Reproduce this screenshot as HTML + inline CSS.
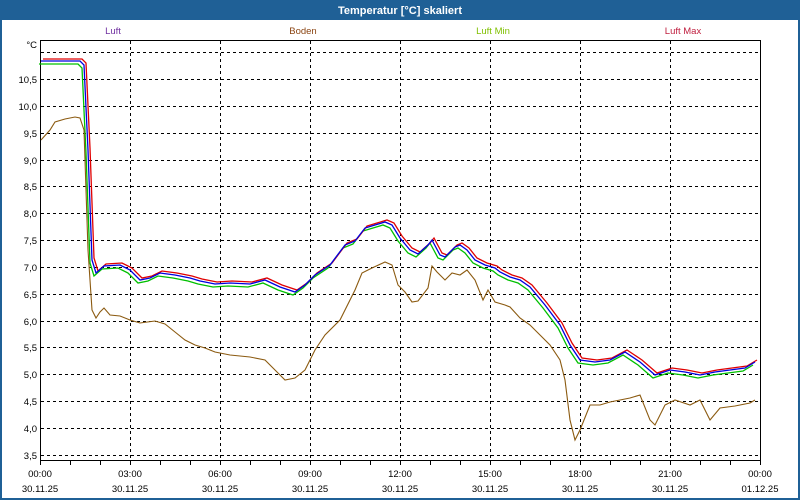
<!DOCTYPE html>
<html><head><meta charset="utf-8"><style>
html,body{margin:0;padding:0;width:800px;height:500px;overflow:hidden;background:#fff;font-family:"Liberation Sans","DejaVu Sans",sans-serif}
</style></head><body>
<svg width="800" height="500" xmlns="http://www.w3.org/2000/svg" style="display:block;font-family:'Liberation Sans',sans-serif">
<rect x="0" y="0" width="800" height="500" fill="#1f6096"/>
<rect x="2" y="20" width="796" height="478" fill="#fff"/>
<text x="400" y="14" fill="#fff" font-size="11" font-weight="bold" text-anchor="middle">Temperatur [°C] skaliert</text>
<g font-size="9.5" text-anchor="middle">
<text x="113" y="34" fill="#7030a0">Luft</text>
<text x="303" y="34" fill="#8b4513">Boden</text>
<text x="493" y="34" fill="#80c000">Luft Min</text>
<text x="683" y="34" fill="#c02040">Luft Max</text>
</g>
<g stroke="#000" stroke-width="1" stroke-dasharray="3,3" fill="none">
<path d="M130.5 41V460M220.5 41V460M310.5 41V460M400.5 41V460M490.5 41V460M580.5 41V460M670.5 41V460"/>
<path d="M41 52.5H760M41 79.5H760M41 106.5H760M41 133.5H760M41 160.5H760M41 186.5H760M41 213.5H760M41 240.5H760M41 267.5H760M41 294.5H760M41 321.5H760M41 347.5H760M41 374.5H760M41 401.5H760M41 428.5H760M41 455.5H760"/>
</g>
<path d="M40.5 40.5H760.5V460.5H40.5Z" stroke="#000" fill="none"/>
<path d="M70.5 461v4M100.5 461v4M130.5 461v4M160.5 461v4M190.5 461v4M220.5 461v4M250.5 461v4M280.5 461v4M310.5 461v4M340.5 461v4M370.5 461v4M400.5 461v4M430.5 461v4M460.5 461v4M490.5 461v4M520.5 461v4M550.5 461v4M580.5 461v4M610.5 461v4M640.5 461v4M670.5 461v4M700.5 461v4M730.5 461v4M760.5 461v4M40.5 461v4" stroke="#000"/>
<g font-size="9.5" fill="#000" text-anchor="end">
<text x="37" y="48">°C</text>
<text x="37" y="83">10,5</text><text x="37" y="110">10,0</text><text x="37" y="137">9,5</text><text x="37" y="164">9,0</text><text x="37" y="190">8,5</text><text x="37" y="217">8,0</text><text x="37" y="244">7,5</text><text x="37" y="271">7,0</text><text x="37" y="298">6,5</text><text x="37" y="325">6,0</text><text x="37" y="351">5,5</text><text x="37" y="378">5,0</text><text x="37" y="405">4,5</text><text x="37" y="432">4,0</text><text x="37" y="459">3,5</text>
</g>
<g font-size="9.5" fill="#000" text-anchor="middle">
<text x="40" y="477">00:00</text><text x="130" y="477">03:00</text><text x="220" y="477">06:00</text><text x="310" y="477">09:00</text><text x="400" y="477">12:00</text><text x="490" y="477">15:00</text><text x="580" y="477">18:00</text><text x="670" y="477">21:00</text><text x="760" y="477">00:00</text>
<text x="40" y="492">30.11.25</text><text x="130" y="492">30.11.25</text><text x="220" y="492">30.11.25</text><text x="310" y="492">30.11.25</text><text x="400" y="492">30.11.25</text><text x="490" y="492">30.11.25</text><text x="580" y="492">30.11.25</text><text x="670" y="492">30.11.25</text><text x="760" y="492">01.12.25</text>
</g>
<defs>
<polyline id="L" points="41,61 80,61 84,65 88,150 92,260 96,273 104,266 120,265 130,270 140,280 150,278 160,273 175,275 190,278 200,281 215,284 230,283 250,284 265,280 280,287 295,292 305,285 315,275 330,265 345,245 355,241 365,228 375,225 385,222 392,225 400,238 410,250 418,254 428,245 432,240 440,255 445,257 455,247 460,245 467,250 475,260 485,265 495,268 500,272 510,277 520,280 530,287 545,305 560,325 570,345 580,360 595,362 610,360 625,352 640,362 655,375 670,370 685,372 700,375 715,372 730,370 745,368 755,362"/>
</defs>
<use href="#L" fill="none" stroke="#00c000" stroke-width="1.3" transform="translate(-2,3)"/>
<use href="#L" fill="none" stroke="#e00000" stroke-width="1.3" transform="translate(2,-2)"/>
<use href="#L" fill="none" stroke="#0000e0" stroke-width="1.3"/>
<polyline fill="none" stroke="#8b5a10" stroke-width="1.1" points="41,140 50,130 55,122 65,119 75,117 80,118 84,130 88,250 92,310 96,318 100,312 104,308 110,315 120,316 130,320 140,323 155,321 165,324 175,332 185,340 195,345 205,348 215,352 230,355 250,357 265,360 275,370 285,380 295,378 305,370 315,350 325,335 340,320 355,290 362,273 372,268 385,262 392,265 398,285 405,292 412,302 418,301 428,288 432,266 437,272 445,280 452,273 460,275 467,270 475,280 483,300 488,290 495,302 505,305 510,307 520,318 530,325 540,335 550,345 560,360 565,380 570,420 575,440 580,430 590,405 600,405 610,402 620,400 630,398 640,395 650,420 655,425 665,405 675,400 690,405 700,400 710,420 720,408 735,406 750,403 755,400"/>
</svg>
</body></html>
